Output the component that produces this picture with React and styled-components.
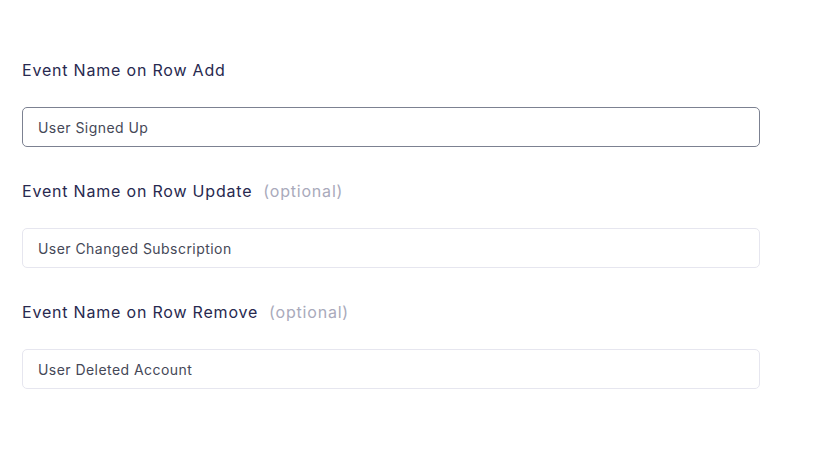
import React from "react";
import styled, { createGlobalStyle } from "styled-components";

const Global = createGlobalStyle`
  html, body { margin: 0; padding: 0; background: #ffffff; }
  body { font-family: Inter, "Noto Sans", sans-serif; -webkit-font-smoothing: antialiased; }
  * { box-sizing: border-box; }
`;

const Form = styled.div`
  display: flex;
  flex-direction: column;
  gap: 32px;
  width: 738px;
  margin-left: 22px;
  padding-top: 58px;
`;

const Field = styled.div`
  display: flex;
  flex-direction: column;
  gap: 25px;
`;

const Label = styled.label`
  display: flex;
  align-items: baseline;
  gap: 11px;
  font-size: 16px;
  line-height: 24px;
  letter-spacing: 0.8px;
  color: #28294f;
  font-weight: 400;
`;

const Optional = styled.span`
  color: #a9aabb;
`;

const Input = styled.input`
  height: 40px;
  width: 100%;
  padding: 0 15px;
  border-radius: 5px;
  border: 1px solid ${(p) => (p.$active ? "#7c8191" : "#e6e6ef")};
  font-family: Inter, "Noto Sans", sans-serif;
  font-size: 14px;
  letter-spacing: 0.45px;
  color: #454857;
  background: #ffffff;
  outline: none;
`;

const fields = [
  { label: "Event Name on Row Add", value: "User Signed Up", optional: false, active: true },
  { label: "Event Name on Row Update", value: "User Changed Subscription", optional: true },
  { label: "Event Name on Row Remove", value: "User Deleted Account", optional: true },
];

export default function App() {
  return (
    <>
      <Global />
      <Form>
        {fields.map((f) => (
          <Field key={f.label}>
            <Label>
              {f.label}
              {f.optional && <Optional>(optional)</Optional>}
            </Label>
            <Input $active={f.active} defaultValue={f.value} readOnly />
          </Field>
        ))}
      </Form>
    </>
  );
}
